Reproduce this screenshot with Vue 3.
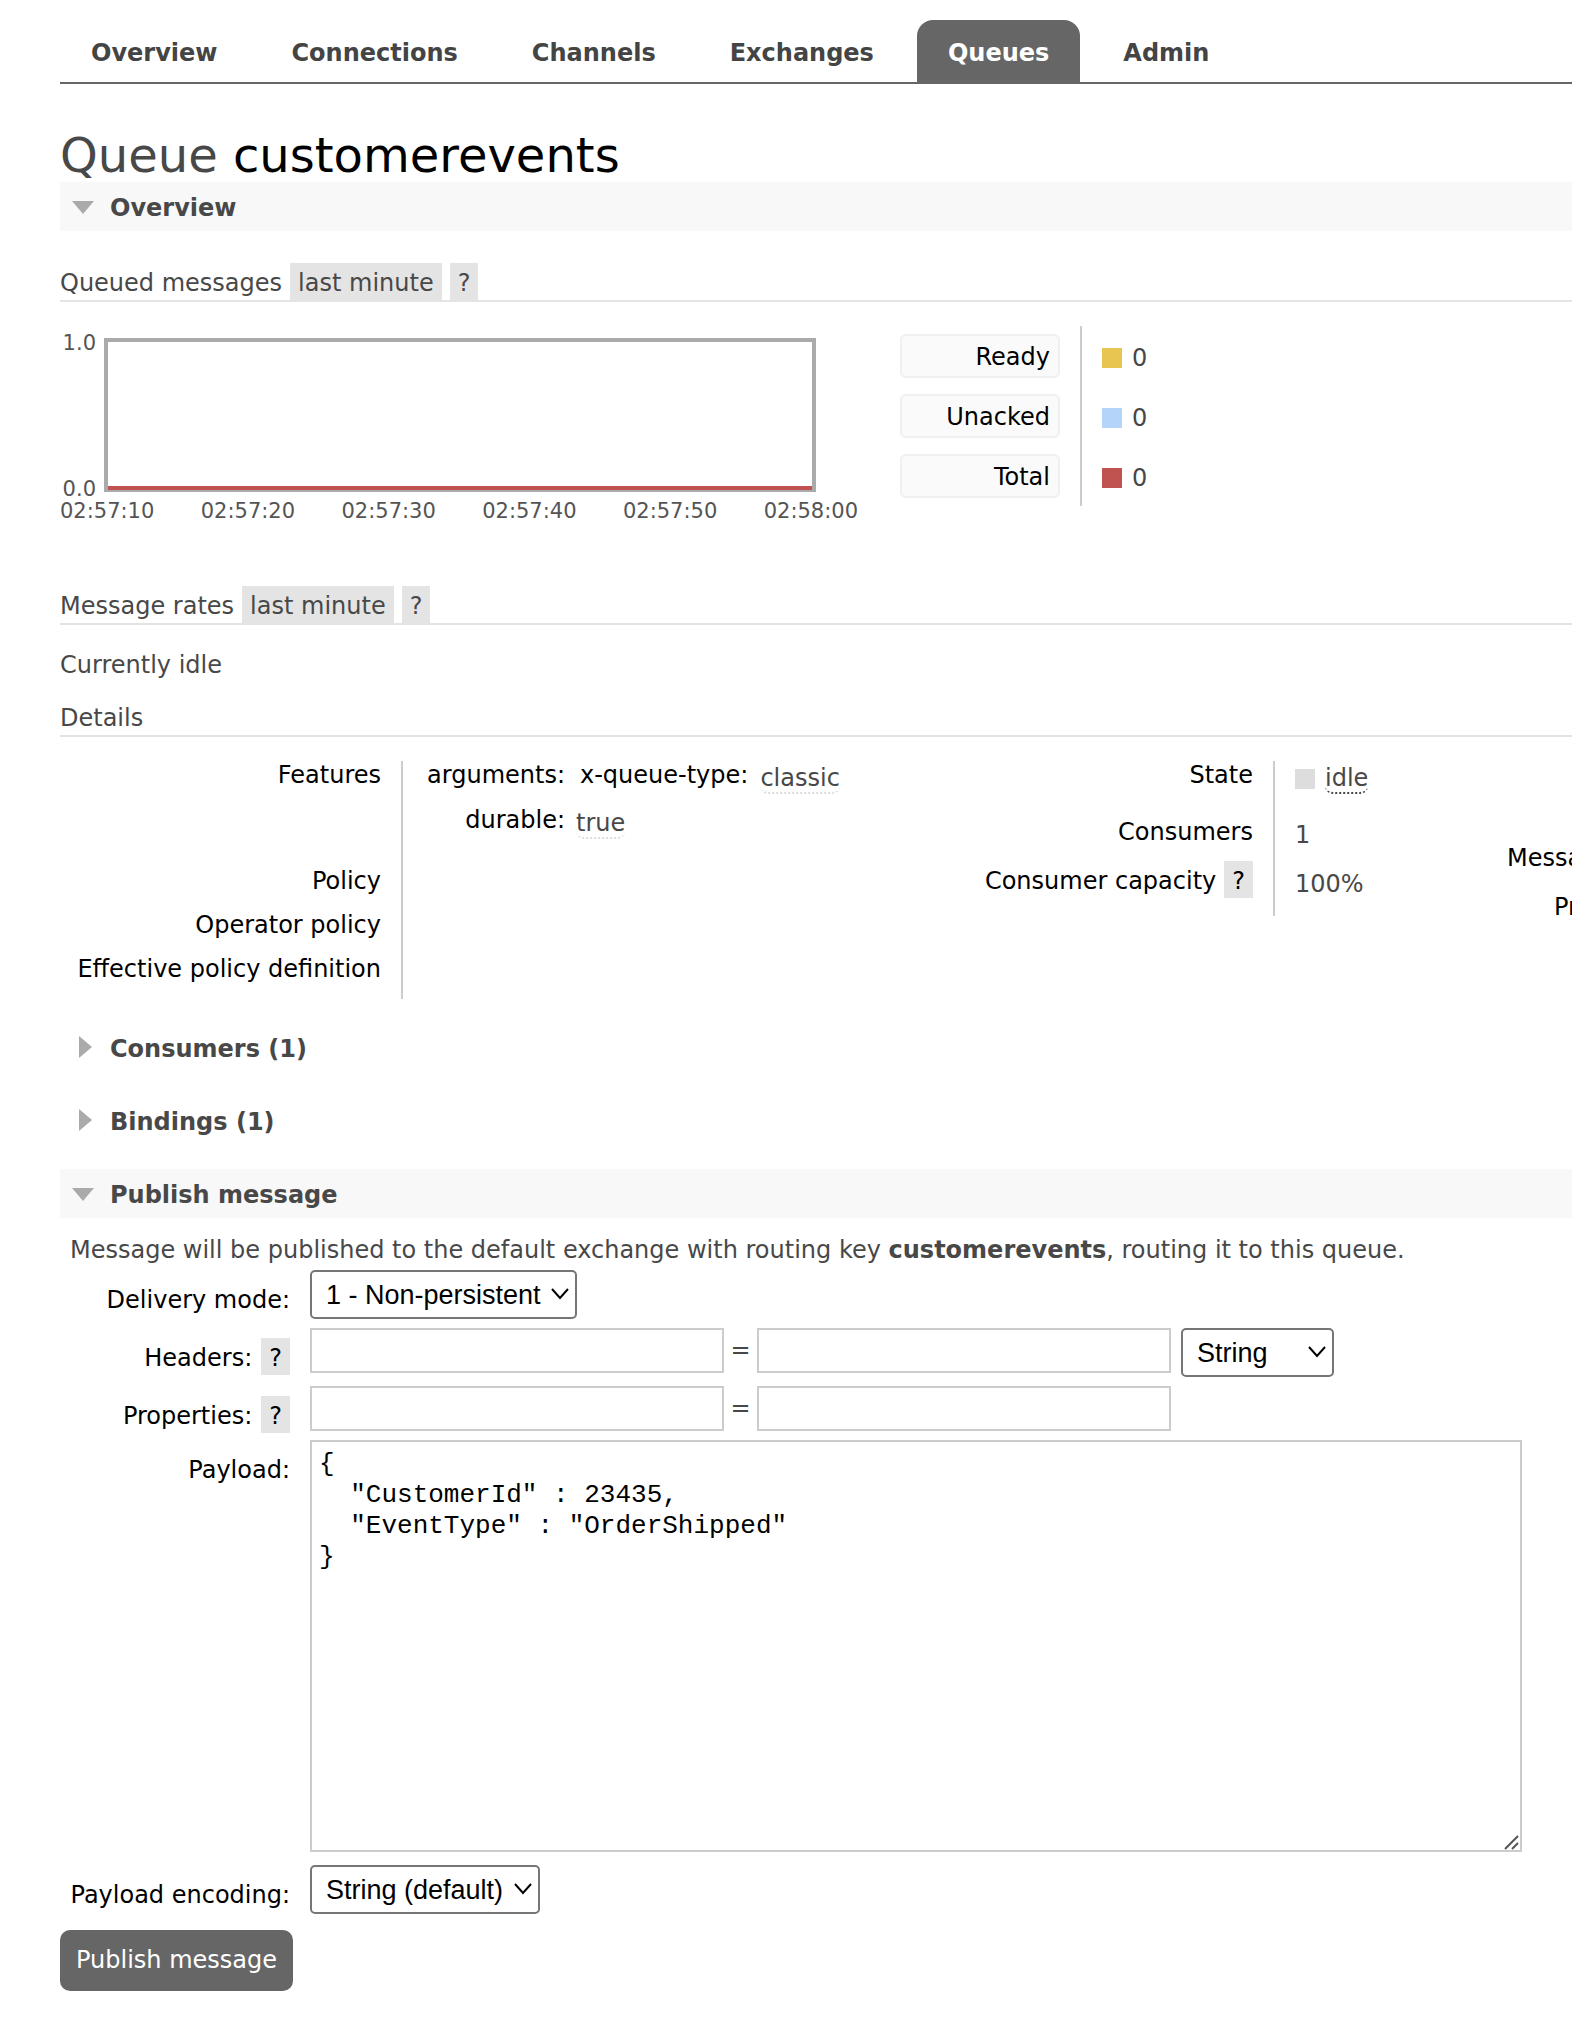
<script setup>
import { ref } from 'vue'

const tabs = ['Overview', 'Connections', 'Channels', 'Exchanges', 'Queues', 'Admin']
const activeTab = 'Queues'
const queueName = 'customerevents'

const times = ['02:57:10', '02:57:20', '02:57:30', '02:57:40', '02:57:50', '02:58:00']
const legend = [
  { label: 'Ready', kind: 'ready', value: 0 },
  { label: 'Unacked', kind: 'unacked', value: 0 },
  { label: 'Total', kind: 'total', value: 0 },
]

const deliveryMode = ref('1')
const headerType = ref('string')
const encoding = ref('string')
const payload = ref('{\n  "CustomerId" : 23435,\n  "EventType" : "OrderShipped"\n}')
</script>

<template>
  <div class="page">
    <nav class="tabs">
      <a v-for="tab in tabs" :key="tab" href="#" class="tab" :class="{ active: tab === activeTab }">{{ tab }}</a>
    </nav>

    <main>
      <h1>Queue <b>{{ queueName }}</b></h1>

      <section>
        <h2 class="bar open">
          <button type="button">
            <svg class="arrow" width="24" height="24" viewBox="0 0 24 24"><path d="M1 6h22L12 19z" /></svg>
            Overview
          </button>
        </h2>

        <h3>Queued messages <button type="button" class="tag">last minute</button><button type="button" class="tag">?</button></h3>
        <div class="stats">
          <div class="chart">
            <div class="chart-body">
              <div class="y-axis"><span>1.0</span><span>0.0</span></div>
              <div class="plot"><div class="series"></div></div>
            </div>
            <div class="x-axis"><span v-for="t in times" :key="t">{{ t }}</span></div>
          </div>
          <table class="legend">
            <tbody>
              <tr v-for="item in legend" :key="item.kind">
                <th scope="row"><button type="button">{{ item.label }}</button></th>
                <td><span class="value"><i class="swatch" :class="item.kind"></i>{{ item.value }}</span></td>
              </tr>
            </tbody>
          </table>
        </div>

        <h3>Message rates <button type="button" class="tag">last minute</button><button type="button" class="tag">?</button></h3>
        <p class="idle-note">Currently idle</p>

        <h3 class="details-title">Details</h3>
        <div class="details">
          <table class="facts policy">
            <tbody>
              <tr class="features">
                <th scope="row">Features</th>
                <td>
                  <dl>
                    <dt>arguments:</dt>
                    <dd><span class="key">x-queue-type:</span> <abbr>classic</abbr></dd>
                    <dt>durable:</dt>
                    <dd><abbr>true</abbr></dd>
                  </dl>
                </td>
              </tr>
              <tr><th scope="row">Policy</th><td></td></tr>
              <tr><th scope="row">Operator policy</th><td></td></tr>
              <tr><th scope="row">Effective policy definition</th><td></td></tr>
            </tbody>
          </table>
          <table class="facts state">
            <tbody>
              <tr class="first">
                <th scope="row">State</th>
                <td><span class="value"><i class="swatch idle"></i><abbr class="dark">idle</abbr></span></td>
              </tr>
              <tr><th scope="row">Consumers</th><td>1</td></tr>
              <tr><th scope="row"><span class="with-tag">Consumer capacity <button type="button" class="tag">?</button></span></th><td>100%</td></tr>
            </tbody>
          </table>
          <table class="facts sizes">
            <tbody>
              <tr><th scope="row"><span class="with-tag">Message body bytes <button type="button" class="tag">?</button></span></th></tr>
              <tr><th scope="row"><span class="with-tag">Process memory <button type="button" class="tag">?</button></span></th></tr>
            </tbody>
          </table>
        </div>
      </section>

      <section>
        <h2 class="bar">
          <button type="button">
            <svg class="arrow" width="24" height="24" viewBox="0 0 24 24"><path d="M8 0v22l13-11z" /></svg>
            Consumers (1)
          </button>
        </h2>
      </section>
      <section>
        <h2 class="bar">
          <button type="button">
            <svg class="arrow" width="24" height="24" viewBox="0 0 24 24"><path d="M8 0v22l13-11z" /></svg>
            Bindings (1)
          </button>
        </h2>
      </section>

      <section>
        <h2 class="bar open">
          <button type="button">
            <svg class="arrow" width="24" height="24" viewBox="0 0 24 24"><path d="M1 6h22L12 19z" /></svg>
            Publish message
          </button>
        </h2>
        <p class="intro">Message will be published to the default exchange with routing key <strong>{{ queueName }}</strong>, routing it to this queue.</p>

        <form @submit.prevent>
          <div class="fields">
            <div class="label"><label for="mode">Delivery mode:</label></div>
            <div class="field">
              <span class="select mode">
                <select id="mode" v-model="deliveryMode">
                  <option value="1">1 - Non-persistent</option>
                  <option value="2">2 - Persistent</option>
                </select>
                <svg width="18" height="12" viewBox="0 0 18 12"><path d="M1 1l8 9 8-9" /></svg>
              </span>
            </div>

            <div class="label"><label for="header-key">Headers:</label><button type="button" class="tag">?</button></div>
            <div class="field">
              <input id="header-key" type="text" />
              <span class="eq">=</span>
              <input type="text" aria-label="Header value" />
              <span class="select type">
                <select v-model="headerType" aria-label="Header type">
                  <option value="string">String</option>
                  <option value="number">Number</option>
                  <option value="boolean">Boolean</option>
                </select>
                <svg width="18" height="12" viewBox="0 0 18 12"><path d="M1 1l8 9 8-9" /></svg>
              </span>
            </div>

            <div class="label"><label for="prop-key">Properties:</label><button type="button" class="tag">?</button></div>
            <div class="field">
              <input id="prop-key" type="text" />
              <span class="eq">=</span>
              <input type="text" aria-label="Property value" />
            </div>

            <div class="label"><label for="payload">Payload:</label></div>
            <div class="field payload">
              <textarea id="payload" v-model="payload" spellcheck="false"></textarea>
              <svg class="grip" width="16" height="16" viewBox="0 0 16 16"><path d="M2 15L15 2M9 15l6-6" /></svg>
            </div>

            <div class="label"><label for="encoding">Payload encoding:</label></div>
            <div class="field">
              <span class="select encoding">
                <select id="encoding" v-model="encoding">
                  <option value="string">String (default)</option>
                  <option value="base64">Base64</option>
                </select>
                <svg width="18" height="12" viewBox="0 0 18 12"><path d="M1 1l8 9 8-9" /></svg>
              </span>
            </div>
          </div>
          <button type="submit" class="submit">Publish message</button>
        </form>
      </section>
    </main>
  </div>
</template>

<style>
body {
  margin: 0;
  background: #fff;
}
</style>

<style scoped>
* {
  box-sizing: border-box;
}
.page {
  padding: 20px 0 27px 60px;
  overflow: hidden;
  font: 24px/28px Verdana, "DejaVu Sans", sans-serif;
  color: #484848;
}
button {
  font: inherit;
  color: inherit;
  border: 0;
  background: none;
  padding: 0;
  cursor: pointer;
}
h1, h2, h3, p, dl, dd {
  margin: 0;
  font-weight: normal;
  font-size: inherit;
}
table {
  border-collapse: collapse;
}
th, td {
  padding: 0;
  font-weight: normal;
  vertical-align: top;
}

.tabs {
  display: flex;
  gap: 12px;
  border-bottom: 2px solid #666;
}
.tab {
  padding: 19px 31px 15px;
  border-radius: 16px 16px 0 0;
  font-weight: bold;
  color: #444;
  text-decoration: none;
}
.tab.active {
  background: #666;
  color: #fff;
}

h1 {
  padding-top: 44px;
  font-size: 48px;
  line-height: 54px;
}
h1 b {
  font-weight: normal;
  color: #000;
}

.bar {
  margin-top: 24px;
}
h1 + section .bar {
  margin-top: 0;
}
.bar.open {
  background: #f8f8f8;
}
.bar button {
  display: flex;
  align-items: center;
  gap: 15px;
  width: 100%;
  height: 49px;
  padding: 2px 0 0 11px;
  font-weight: bold;
  text-align: left;
}
.arrow {
  margin-bottom: 2px;
  fill: #aaa;
}

h3 {
  display: flex;
  align-items: baseline;
  gap: 8px;
  margin-top: 32px;
  border-bottom: 2px solid #e4e4e4;
  line-height: 33px;
}
.tag {
  padding: 4px 8px 0;
  background: #e4e4e4;
  line-height: 33px;
}

.stats {
  display: flex;
  gap: 42px;
  margin: 24px 0 80px;
}
.stats + h3 {
  margin-top: 0;
}
.chart {
  width: 798px;
  height: 180px;
  padding-top: 5px;
  font-size: 21px;
  line-height: 24px;
  color: #545454;
}
.chart-body {
  display: flex;
  gap: 8px;
  padding-right: 42px;
}
.y-axis {
  display: flex;
  flex-direction: column;
  justify-content: space-between;
  width: 36px;
  text-align: right;
}
.plot {
  display: flex;
  align-items: flex-end;
  flex: 1;
  height: 154px;
  margin: 7px 0 9px;
  border: 4px solid #aaa;
  border-bottom-width: 2px;
}
.series {
  width: 100%;
  height: 4px;
  background: #c0534f;
}
.x-axis {
  display: flex;
  justify-content: space-between;
  margin-top: -2px;
}

.legend {
  height: 180px;
}
.legend th {
  width: 180px;
  padding: 8px 20px 8px 0;
}
.legend th button {
  width: 160px;
  padding: 2px 8px 0;
  border: 2px solid #f0f0f0;
  border-radius: 6px;
  background: #fafafa;
  line-height: 38px;
  color: #000;
  text-align: right;
}
.legend td {
  padding: 18px 0 0 20px;
  border-left: 2px solid #ccc;
}
.value {
  display: flex;
  align-items: center;
  gap: 10px;
}
.swatch {
  width: 20px;
  height: 20px;
}
.ready { background: #e8c550; }
.unacked { background: #b4d5f9; }
.total { background: #c0534f; }
.idle { background: #ddd; }

.idle-note {
  margin-top: 26px;
}
.details-title {
  margin-top: 23px;
}
.details {
  display: flex;
  align-items: flex-start;
  margin-top: 24px;
}
.facts {
  flex: none;
  white-space: nowrap;
}
.facts th {
  padding-right: 20px;
  color: #000;
  text-align: right;
}
.facts td {
  padding: 3px 0 0 20px;
  border-left: 2px solid #ccc;
}
.policy {
  width: 908px;
}
.policy th {
  width: 342px;
}
.policy tr {
  height: 44px;
}
.policy .features {
  height: 106px;
}
.policy .features td {
  padding: 0 0 0 24px;
}
.facts dl {
  display: grid;
  grid-template-columns: 138px auto;
  justify-content: start;
  gap: 12px 11px;
}
.facts dt {
  color: #000;
  text-align: right;
}
.facts dd {
  display: flex;
  gap: 12px;
}
.key {
  padding-left: 4px;
  color: #000;
}
abbr {
  margin-top: 3px;
  border-bottom: 2px dotted #ddd;
  border-radius: 8px;
}
abbr.dark {
  margin: 0;
  border-color: #484848;
}
.state {
  width: 521px;
}
.state th {
  width: 306px;
}
.state tr {
  height: 49px;
}
.state .first {
  height: 57px;
}
.sizes {
  margin: 83px 0 0 18px;
}
.sizes tr {
  height: 49px;
}
.with-tag {
  display: flex;
  align-items: baseline;
  justify-content: flex-end;
  gap: 8px;
  margin-top: -6px;
}

.intro {
  margin-top: 18px;
  padding-left: 10px;
}
.fields {
  display: grid;
  grid-template-columns: 230px minmax(0, 1fr);
  gap: 9px 20px;
  margin-top: 6px;
}
.label {
  display: flex;
  align-items: baseline;
  justify-content: flex-end;
  gap: 9px;
  height: 45px;
  padding-top: 16px;
  color: #000;
}
.label .tag {
  margin-top: -7px;
}
.field {
  display: flex;
  align-items: flex-start;
}
.field input {
  width: 414px;
  height: 45px;
  padding: 4px 8px;
  border: 2px solid #ccc;
  font: inherit;
}
.eq {
  width: 33px;
  line-height: 44px;
  text-align: center;
}
.select {
  position: relative;
}
.select select {
  width: 100%;
  height: 49px;
  padding: 0 14px;
  border: 2px solid #767676;
  border-radius: 5px;
  background: #fff;
  appearance: none;
  font: 27px "Liberation Sans", Arial, sans-serif;
  color: #000;
}
.select svg {
  position: absolute;
  top: 18px;
  right: 8px;
  fill: none;
  stroke: #000;
  stroke-width: 2;
  pointer-events: none;
}
.mode { width: 267px; }
.type {
  width: 153px;
  margin-left: 10px;
}
.encoding { width: 230px; }
.payload {
  position: relative;
  padding-bottom: 4px;
  margin-right: 50px;
}
textarea {
  width: 100%;
  height: 412px;
  padding: 7px;
  border: 2px solid #ccc;
  resize: none;
  font: 26px/31px "Liberation Mono", "Courier New", monospace;
  color: #000;
}
.grip {
  position: absolute;
  right: 3px;
  bottom: 6px;
  fill: none;
  stroke: #555;
  stroke-width: 2;
}
.submit {
  margin-top: 16px;
  padding: 0 16px;
  border-radius: 10px;
  background: #666;
  color: #fff;
  line-height: 61px;
}
</style>
